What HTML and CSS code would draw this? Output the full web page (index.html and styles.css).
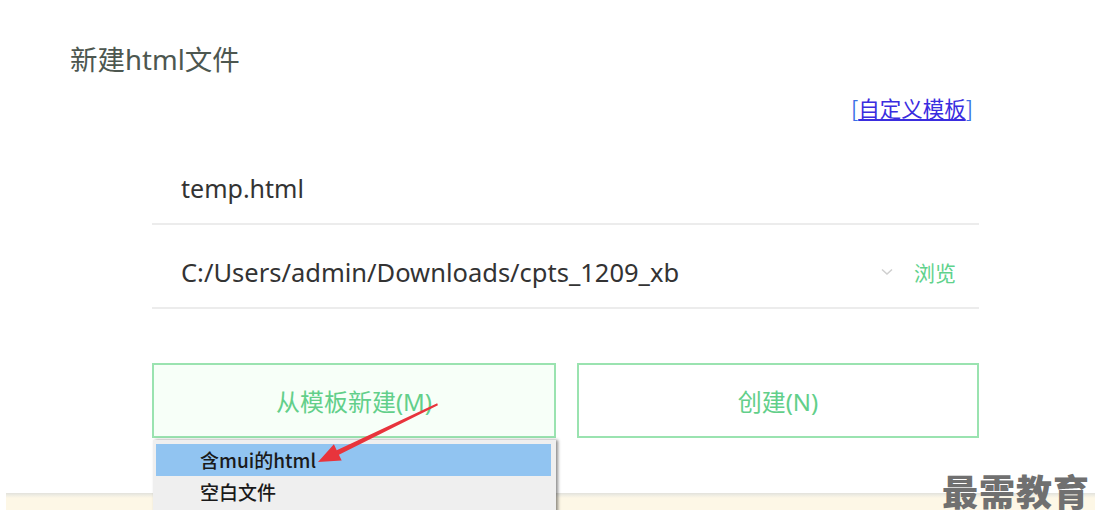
FILE: index.html
```html
<!DOCTYPE html>
<html lang="zh-CN">
<head>
<meta charset="utf-8">
<title>新建html文件</title>
<link rel="stylesheet" href="styles.css">
</head>
<body>
<div class="shot">
  <h1 class="title">新建html文件</h1>
  <div class="form">
    <div class="link-row">
      <a class="custom" href="#"><span class="br">[</span><span class="lt">自定义模板</span><span class="br">]</span></a>
    </div>
    <div class="field"><span class="val">temp.html</span></div>
    <div class="field">
      <span class="val">C:/Users/admin/Downloads/cpts_1209_xb</span>
      <svg class="chev" width="12" height="8" viewBox="0 0 12 8"><path d="M1 1.5 L6 6 L11 1.5" fill="none" stroke="#cfcfcf" stroke-width="1.5"/></svg>
      <span class="browse">浏览</span>
    </div>
    <div class="buttons">
      <div class="btn-wrap">
        <div class="btn tpl">从模板新建(M)</div>
        <div class="menu">
          <div class="item active">含mui的html</div>
          <div class="item">空白文件</div>
        </div>
      </div>
      <div class="btn">创建(N)</div>
    </div>
  </div>
  <div class="band"></div>
  <svg class="arrow" width="1095" height="532" viewBox="0 0 1095 532">
    <polygon points="437.2,403.2 336.7,450.2 333.9,444.3 318,462 341.7,460.5 338.9,454.8 437.9,405.2" fill="#e8343c"/>
  </svg>
</div>
<div class="watermark">最需教育</div>
</body>
</html>
```
FILE: styles.css
```css
html, body {
  margin: 0;
  padding: 0;
  background: #fff;
}
body {
  position: relative;
  width: 1095px;
  height: 532px;
  overflow: hidden;
  font-family: "Noto Sans", "Noto Sans CJK SC", sans-serif;
}
.shot {
  position: relative;
  height: 510px;
  overflow: hidden;
  display: flex;
  flex-direction: column;
}
.title {
  margin: 42px 0 0 70px;
  font-size: 27.5px;
  line-height: 36px;
  font-weight: 400;
  color: #4d5750;
}
.form {
  margin-left: 152px;
  width: 827px;
  display: flex;
  flex-direction: column;
}
.link-row {
  display: flex;
  justify-content: flex-end;
  padding-right: 6px;
  margin-top: 18px;
  height: 24px;
  line-height: 24px;
}
.custom {
  font-size: 21.5px;
  font-family: "Noto Sans CJK SC", sans-serif;
  text-decoration: none;
  color: #3a2ddf;
}
.custom .br { color: #3b6ee6; }
.custom .lt { text-decoration: underline; text-underline-offset: 2px; }
.field {
  height: 70px;
  padding: 12px 23px 0 29px;
  border-bottom: 2px solid #ececec;
  display: flex;
  align-items: center;
}
.link-row + .field { margin-top: 21px; }
.val {
  flex: 1;
  font-size: 25px;
  color: #333;
}
.field + .field .val { font-size: 25.5px; }
.chev { margin-right: 21px; }
.browse {
  font-size: 21px;
  font-family: "Noto Sans CJK SC", sans-serif;
  color: #5fd28c;
}
.buttons {
  margin-top: 54px;
  display: flex;
  gap: 21px;
}
.btn-wrap {
  position: relative;
  width: 404px;
}
.btn {
  width: 402px;
  height: 75px;
  box-sizing: border-box;
  border: 2px solid #9ae3b0;
  display: flex;
  align-items: center;
  justify-content: center;
  font-size: 24px;
  font-family: "Noto Sans", "Noto Sans CJK SC", sans-serif;
  color: #62cf8a;
  background: #fff;
}
.btn.tpl {
  width: 404px;
  background: #f7fff8;
}
.menu {
  position: absolute;
  left: 1px;
  top: 77px;
  width: 403px;
  height: 110px;
  background: #efefef;
  box-shadow: 2px 0 3px rgba(0, 0, 0, 0.45);
  padding: 4px 5px 0 3px;
  box-sizing: border-box;
}
.item {
  height: 32px;
  line-height: 32px;
  padding-left: 44px;
  font-size: 19px;
  font-weight: 500;
  font-family: "Noto Sans CJK SC", sans-serif;
  color: #1a1a1a;
}
.item.active { background: #91c4f1; }
.band {
  margin: auto 0 0 6px;
  height: 17px;
  background: linear-gradient(#e2e2dc, #f3f0e4 3px, #fdf7e6 5px);
}
.watermark {
  position: absolute;
  right: 5px;
  top: 472px;
  font-size: 36px;
  line-height: 36px;
  font-weight: 900;
  color: #707070;
  font-family: "Noto Sans CJK SC", sans-serif;
  letter-spacing: 1px;
}
.arrow {
  position: absolute;
  left: 0;
  top: 0;
  pointer-events: none;
}
```
